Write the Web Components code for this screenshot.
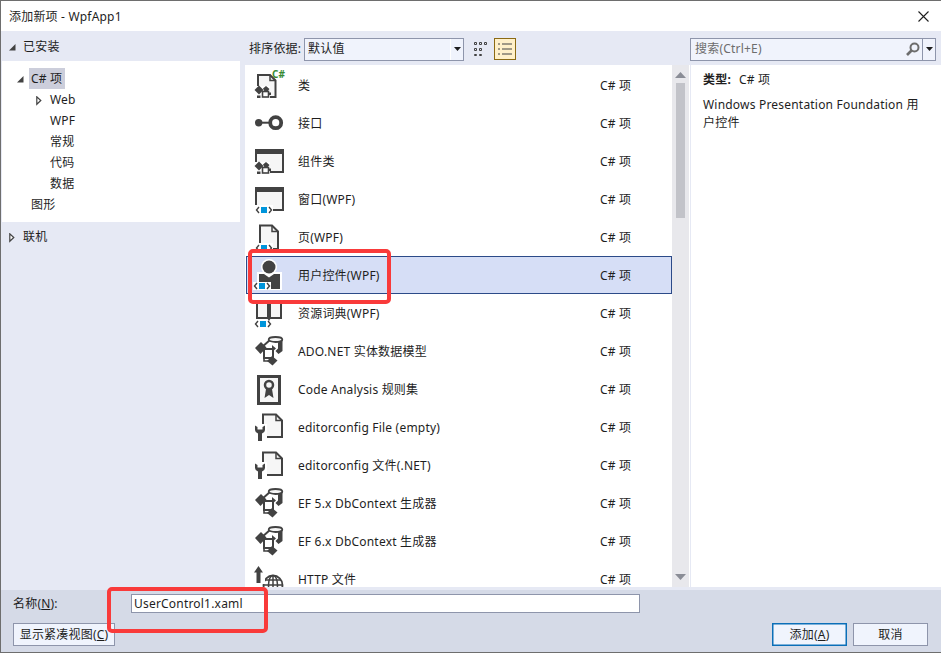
<!DOCTYPE html>
<html lang="zh"><head><meta charset="utf-8"><title>添加新项</title>
<style>
html,body{margin:0;padding:0;background:#fff}
body{font:12px/16px "Noto Sans","Noto Sans CJK SC",sans-serif;color:#1e1e1e;letter-spacing:.2px}
</style></head><body>
<x-dialog></x-dialog>
<script>
const D='#424242',L='#F6F6F6',B='#0095DB';
const tag=(x,y=24)=>`<path d="M${x+3} ${y}l-2.500 3 2.500 3M${x+13} ${y}l2.500 3-2.500 3" fill="none" stroke="${D}" stroke-width="1.400"/><rect x="${x+5}" y="${y}" width="6" height="6" fill="${B}"/>`;
const gear=`<path d="M0 17h16v13H0z" fill="#fff"/><path d="M.5 21l4.500-4.500L9.500 21 5 25.500z" fill="${D}"/><path d="M3 26.500h3.500V29H3z" fill="${D}"/><path d="M9 19.500l3-2.500 3.500 3-2 2.500h-3z" fill="${D}"/><rect x="8.500" y="22.500" width="6" height="5.500" fill="#fff" stroke="${D}" stroke-width="1.600"/><path d="M14.500 23.500H17v2.500h-2.500z" fill="${D}"/>`;
const winShape=`<path d="M2 5h27v22H2z" fill="${L}" stroke="${D}" stroke-width="2"/><path d="M1 4h29v5H1z" fill="${D}"/>`;
const net=`<path d="M1 13l6-6 5.500 5.500-6 6.500z" fill="${D}"/><path d="M7 13L17 4" stroke="${D}" stroke-width="2"/><ellipse cx="21.500" cy="4.500" rx="6.800" ry="2.500" fill="${L}" stroke="${D}" stroke-width="1.800"/><path d="M28.500 5v11l-4 3-3-3 2.500-2.500V7.500z" fill="${D}"/><path d="M18 10l4 3.500-4 3.500z" fill="${D}"/><rect x="10" y="14" width="9" height="9" fill="#fff" stroke="${D}" stroke-width="2"/><path d="M13 26l5-5 5.500 4.500-5 5z" fill="${D}"/><path d="M10 23v3h5" fill="none" stroke="${D}" stroke-width="1.600"/>`;
const docR=`<path d="M9 3.500h13l6 6V26H9z" fill="${L}" stroke="${D}" stroke-width="2"/><path d="M22 3.500v6h6" fill="none" stroke="${D}" stroke-width="1.500"/>`;
const wrench=`<path d="M0 13h13v19H0z" fill="#fff"/><path d="M1 14.500V19q0 2 3 3.500V30h4v-7.500q3-1.500 3-3.500v-4.500l-2.500 1.500v2.500h-5V16z" fill="${D}"/>`;
const ICONS={
cls:`<path d="M4 6h12l5.500 5.500V28H4z" fill="${L}" stroke="${D}" stroke-width="2"/><path d="M16 6v5.500h5.500" fill="none" stroke="${D}" stroke-width="1.500"/>${gear}<text x="18" y="9" font-family="'Noto Sans',sans-serif" font-size="10" font-weight="700" letter-spacing="0" fill="#388A34">C#</text>`,
iface:`<circle cx="4.700" cy="15.700" r="3.700" fill="${D}"/><path d="M8 15.700h10" stroke="${D}" stroke-width="2"/><circle cx="21.700" cy="15.700" r="5.500" fill="#fff" stroke="${D}" stroke-width="3.800"/>`,
comp:`${winShape}${gear}`,
win:`${winShape}<path d="M0 22h19v9H0z" fill="#fff"/>${tag(2)}`,
page:`<path d="M6 4.500h12l6 6V28H6z" fill="${L}" stroke="${D}" stroke-width="2"/><path d="M18 4.500v6h6" fill="none" stroke="${D}" stroke-width="1.500"/><path d="M0 22h19v9H0z" fill="#fff"/>${tag(2)}`,
user:`<path d="M3 13h25v18H3z" fill="#fff"/><circle cx="15" cy="8" r="8" fill="#fff"/><circle cx="15" cy="8" r="6.500" fill="${D}"/><path d="M5 15h5l5 3.500 5-3.500h6v15H5z" fill="${D}"/><path d="M-1 23h18v8H-1z" fill="#fff"/>${tag(0)}`,
dict:`<path d="M3 5h11v16H3zM16 5h11v16H16z" fill="${L}" stroke="${D}" stroke-width="2"/><path d="M13 21h4l-2 3z" fill="${D}"/>${tag(1)}`,
net,
cert:`<rect x="4.500" y="3.500" width="21" height="27" fill="${L}" stroke="${D}" stroke-width="3"/><circle cx="15" cy="12" r="4" fill="${L}" stroke="${D}" stroke-width="2.500"/><path d="M12 16l-1.500 9 4.500-3 4.500 3-1.500-9z" fill="${D}"/>`,
conf:`${docR}${wrench}`,
http:`<circle cx="19" cy="22" r="9.500" fill="#fff" stroke="${D}" stroke-width="1.800"/><ellipse cx="19" cy="22" rx="4.500" ry="9.500" fill="none" stroke="${D}" stroke-width="1.500"/><path d="M9.500 22h19M11 17h16M11 27h16M19 12v20" stroke="${D}" stroke-width="1.500"/><path d="M-1 11h12v10H-1z" fill="#fff"/><path d="M0 9.500L4.500 3 9 9.500H6.500V20h-4V9.500z" fill="${D}"/>`
};
function comp(name,html,extra){
  const tpl=document.createElement('template');tpl.innerHTML=html;
  customElements.define(name,class extends HTMLElement{
    connectedCallback(){ if(this.shadowRoot)return; const r=this.attachShadow({mode:'open'}); const f=tpl.content.cloneNode(true); extra&&extra.call(this,f); r.appendChild(f); }
  });
}
comp('x-icon',`<style>:host{display:block;width:32px;height:32px}svg{display:block;overflow:visible}</style><svg width="32" height="32" viewBox="0 0 32 32"></svg>`,function(r){r.querySelector('svg').innerHTML=ICONS[this.getAttribute('name')]||''});
comp('x-row',`<style>
:host{display:grid;grid-template-columns:32px 290px 1fr;column-gap:12px;align-items:center;height:38px;box-sizing:border-box;border:1px solid transparent;padding-left:7px;margin-left:1px;white-space:nowrap}
:host([selected]){background:#D6DEF6;border-color:#2C4A88}
.n,.t{margin-top:2px}
</style><x-icon></x-icon><span class="n"><slot></slot></span><span class="t">C# 项</span>`,function(r){r.querySelector('x-icon').setAttribute('name',this.getAttribute('icon'))});
comp('x-tree-item',`<style>
:host{display:block;height:21px;line-height:21px;white-space:nowrap;position:relative;padding-left:calc(var(--x) * 1px)}
:host([sel]) .l{background:#CCCEDB;display:inline-block;padding:0 3px 0 2px;margin-left:-2px}
svg{position:absolute;top:calc(50% - 4px);left:calc((var(--x) - 14) * 1px)}
</style><svg width="8" height="10" viewBox="0 0 8 10"></svg><span class="l"><slot></slot></span>`,function(r){
  const a=this.getAttribute('arrow'),s=r.querySelector('svg');
  this.style.setProperty('--x',this.getAttribute('x')||'0');
  if(a==='open')s.innerHTML=`<path d="M6.500 1v6.500H0z" fill="${D}"/>`;
  else if(a==='closed')s.innerHTML=`<path d="M.8 .8v7.500l4-3.800z" fill="#fff" stroke="${D}" stroke-width="1.200"/>`;
  else s.style.display='none';
});
comp('x-button',`<style>
:host{display:inline-flex;align-items:center;justify-content:center;box-sizing:border-box;height:23px;border:1px solid #8E95AB;background:#F0F4FD;white-space:nowrap}
:host([primary]){border-color:#0B6FB8;box-shadow:inset 0 0 0 .5px #0B6FB8}
</style><slot></slot>`);
comp('x-title',`<style>
:host{display:flex;align-items:center;justify-content:space-between;height:30px;padding:1px 12px 0 8px;box-sizing:border-box;background:#fff}
svg{display:block}
</style><slot></slot><svg width="11" height="11" viewBox="0 0 11 11"><path d="M.5.500l10 10M10.500.500l-10 10" stroke="#1e1e1e" stroke-width="1.100"/></svg>`);
comp('x-side',`<style>
:host{display:flex;flex-direction:column;width:240px;background:#E6E9F4}
.h{height:30px;padding-top:1px;box-sizing:border-box}
.w{background:#fff;margin:0 1px 0 1px;padding:7px 0 7px;height:147px}
.s{height:30px}
</style>
<div class="h"><x-tree-item x="22" arrow="open" style="height:30px;line-height:30px">已安装</x-tree-item></div>
<div class="w">
<x-tree-item x="29" arrow="open" sel>C# 项</x-tree-item>
<x-tree-item x="48" arrow="closed">Web</x-tree-item>
<x-tree-item x="48">WPF</x-tree-item>
<x-tree-item x="48">常规</x-tree-item>
<x-tree-item x="48">代码</x-tree-item>
<x-tree-item x="48">数据</x-tree-item>
<x-tree-item x="29">图形</x-tree-item>
</div>
<div class="s"><x-tree-item x="22" arrow="closed" style="height:30px;line-height:30px">联机</x-tree-item></div>`);
comp('x-center',`<style>
:host{display:flex;flex-direction:column;width:449px;background:#E6E9F4}
.bar{height:34px;display:flex;align-items:center;padding:2px 0 0 8px;box-sizing:border-box}
.lab{width:55px;white-space:nowrap}
.combo{width:160px;height:23px;box-sizing:border-box;border:1px solid #8E95AB;background:#F0F3FC;display:flex;align-items:center;padding-left:3px}
.combo .v{flex:1}
.combo .a{width:12px;height:21px;border-left:1px solid #fff;display:flex;align-items:center;justify-content:center}
.g{margin:0 6px 0 10px;display:block}
.tg{width:22px;height:22px;box-sizing:border-box;border:1px solid #8B6A14;background:#FFF0C9;display:flex;align-items:center;justify-content:center}
.body{display:flex;height:522px;margin-left:4px}
.list{width:427px;background:#fff;overflow:hidden;padding-top:1px;box-sizing:border-box}
.sb{width:17px;background:#E8E8EC;position:relative;display:flex;flex-direction:column;align-items:center;justify-content:space-between;border-right:1px solid #fff}
.sb svg{display:block;margin:7px 0}
.th{position:absolute;left:4px;top:18px;width:9px;height:135px;background:#C2C3C9}
</style>
<div class="bar"><span class="lab">排序依据:</span>
<div class="combo"><span class="v">默认值</span><span class="a"><svg width="7" height="4"><path d="M0 0h7L3.500 4z" fill="#1e1e1e"/></svg></span></div>
<svg class="g" width="14" height="15" viewBox="0 0 14 15"><path d="M.5.500h2v2h-2zM5.500.500h2v2h-2zM10.500.500h2v2h-2zM.5 6.500h2v2h-2zM5.500 6.500h2v2h-2zM.5 12.500h2v1h-2zM5.500 12.500h2v1h-2z" fill="none" stroke="#424242"/></svg>
<div class="tg"><svg width="14" height="12" viewBox="0 0 14 12"><path d="M0 1h2M4 1h10M0 6h2M4 6h10M0 11h2M4 11h10" stroke="#424242"/></svg></div></div>
<div class="body"><div class="list"><slot></slot></div>
<div class="sb"><svg width="11" height="6"><path d="M0 6L5.500 0 11 6z" fill="#8A8D96"/></svg><svg width="11" height="6"><path d="M0 0L5.500 6 11 0z" fill="#8A8D96"/></svg><div class="th"></div></div></div>`);
comp('x-details',`<style>
:host{display:flex;flex-direction:column;flex:1;background:#E6E9F4;min-width:0}
.bar{height:34px;display:flex;align-items:center;padding-top:2px;box-sizing:border-box}
.s{width:246px;height:23px;box-sizing:border-box;border:1px solid #8E95AB;background:#F0F3FC;display:flex;align-items:center;padding-left:4px;color:#6D6D6D}
.s .p{flex:1}
.s .a{width:12px;height:21px;border-left:1px solid #8E95AB;display:flex;align-items:center;justify-content:center}
.s svg.m{margin-right:2px}
.w{height:522px;background:#fff;margin-left:1px;padding:7px 12px 0 12px;box-sizing:border-box}
.k{display:flex;gap:8px;margin:0 0 8px 0}
b{font-weight:700}
.d{line-height:18px;width:216px}
</style>
<div class="bar"><div class="s"><span class="p">搜索(Ctrl+E)</span><svg class="m" width="14" height="14" viewBox="0 0 14 14"><circle cx="8.500" cy="5.500" r="4" fill="none" stroke="#6D6D6D" stroke-width="2"/><path d="M5.500 8.500L1 13" stroke="#6D6D6D" stroke-width="2.600"/></svg><span class="a"><svg width="7" height="4"><path d="M0 0h7L3.500 4z" fill="#1e1e1e"/></svg></span></div></div>
<div class="w"><div class="k"><b>类型:</b><span>C# 项</span></div><div class="d">Windows Presentation Foundation 用户控件</div></div>`);
comp('x-footer',`<style>
:host{display:grid;grid-template-columns:118px 509px 1fr;grid-template-rows:19px 23px;row-gap:10px;height:62px;padding:4px 13px 0 12px;box-sizing:border-box;background:#D5DAE7;align-items:center}
.i{height:19px;box-sizing:border-box;border:1px solid #8E95AB;background:#fff;padding-left:2px;line-height:17px;white-space:nowrap}
.r{grid-column:1 / 4;display:flex;justify-content:space-between}
.rr{display:flex;gap:6px}
.rr x-button{width:75px}
u{text-underline-offset:1px}
</style>
<span>名称(<u>N</u>):</span><div class="i">UserControl1.xaml</div><span></span>
<div class="r"><x-button style="width:102px">显示紧凑视图(<u>C</u>)</x-button><div class="rr"><x-button primary>添加(<u>A</u>)</x-button><x-button>取消</x-button></div></div>`);
comp('x-annot',`<style>:host{position:absolute;box-sizing:border-box;border:4px solid #F93A3A;border-radius:5px;pointer-events:none}</style>`);
comp('x-dialog',`<style>
:host{display:grid;grid-template-rows:30px 559px 62px;width:941px;height:653px;box-sizing:border-box;border:1px solid #6E6E6E;border-right:0;position:relative;overflow:hidden;background:#E6E9F4}
.m{display:flex;min-height:0}
</style>
<x-title>添加新项 - WpfApp1</x-title>
<div class="m"><x-side></x-side>
<x-center>
<x-row icon="cls">类</x-row><x-row icon="iface">接口</x-row><x-row icon="comp">组件类</x-row><x-row icon="win">窗口(WPF)</x-row><x-row icon="page">页(WPF)</x-row><x-row icon="user" selected>用户控件(WPF)</x-row><x-row icon="dict">资源词典(WPF)</x-row><x-row icon="net">ADO.NET 实体数据模型</x-row><x-row icon="cert">Code Analysis 规则集</x-row><x-row icon="conf">editorconfig File (empty)</x-row><x-row icon="conf">editorconfig 文件(.NET)</x-row><x-row icon="net">EF 5.x DbContext 生成器</x-row><x-row icon="net">EF 6.x DbContext 生成器</x-row><x-row icon="http">HTTP 文件</x-row>
</x-center>
<x-details></x-details></div>
<x-footer></x-footer>
<x-annot style="left:247px;top:248px;width:143px;height:55px"></x-annot>
<x-annot style="left:106px;top:586px;width:161px;height:46px"></x-annot>`);
</script>
</body></html>
